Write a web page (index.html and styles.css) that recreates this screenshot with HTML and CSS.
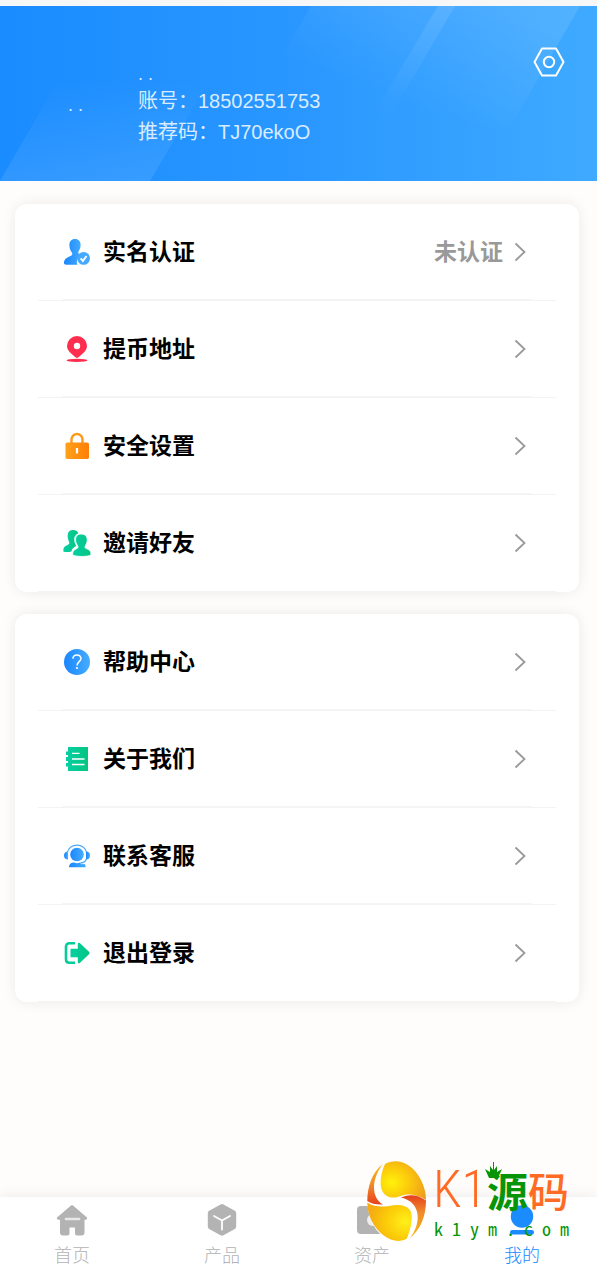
FILE: index.html
```html
<!DOCTYPE html>
<html lang="zh-CN">
<head>
	<meta charset="UTF-8">
	<meta name="viewport" content="width=device-width, initial-scale=1">
	<title>我的</title>
	<link rel="stylesheet" href="styles.css">
</head>
<body>
	<!-- 公用渐变和箭头 -->
	<svg class="defs" width="0" height="0" aria-hidden="true">
		<defs>
			<linearGradient id="blue"><stop offset="0" stop-color="#1a86ff"/><stop offset="1" stop-color="#45adff"/></linearGradient>
			<linearGradient id="green"><stop offset="0" stop-color="#06cfa4"/><stop offset="1" stop-color="#04c580"/></linearGradient>
			<linearGradient id="orange"><stop offset="0" stop-color="#ffa21a"/><stop offset="1" stop-color="#ff7e06"/></linearGradient>
			<symbol id="arrow" viewBox="0 0 12 20"><path d="M1.5 1.5L10.5 10L1.5 18.5" fill="none" stroke="#999" stroke-width="1.8"/></symbol>
		</defs>
	</svg>

	<header class="header">
		<svg class="headerBg" viewBox="0 0 597 175" preserveAspectRatio="none" aria-hidden="true">
			<defs>
				<linearGradient id="up" x1="0" y1="1" x2="0" y2="0"><stop offset="0" stop-color="#fff" stop-opacity=".1"/><stop offset="1" stop-color="#fff" stop-opacity="0"/></linearGradient>
				<linearGradient id="down" x1="0" y1="0" x2="0" y2="1"><stop offset="0" stop-color="#fff" stop-opacity=".1"/><stop offset="1" stop-color="#fff" stop-opacity="0"/></linearGradient>
				<linearGradient id="wide" gradientUnits="userSpaceOnUse" x1="480" y1="0" x2="440" y2="110"><stop offset="0" stop-color="#fff" stop-opacity=".1"/><stop offset="1" stop-color="#fff" stop-opacity="0"/></linearGradient>
			</defs>
			<path d="M0 175L58 75H209L150 175z" fill="url(#up)"/>
			<path d="M311 0H580L505 130H236z" fill="url(#wide)"/>
			<path d="M438 0H455L388 114L376 104z" fill="url(#down)"/>
		</svg>
		<div class="avatar">. .</div>
		<div class="info">
			<p class="name">. .</p>
			<p>账号：18502551753</p>
			<p>推荐码：TJ70ekoO</p>
		</div>
		<button class="setting" type="button" aria-label="设置">
			<svg viewBox="0 0 32 32" width="32" height="32" fill="none" stroke="#fff" stroke-width="2"><path d="M9 2.5H23L30.5 16L23 29.5H9L1.500 16z" stroke-linejoin="round"/><circle cx="16" cy="16" r="5.200"/></svg>
		</button>
	</header>

	<main class="content">
		<ul class="menu">
			<li><a href="#">
				<svg class="icon" viewBox="0 0 30 30"><path d="M13 2c3.600 0 5.600 2.400 5.600 6 0 2.800-1 4.600-2 6.200-.6 1.500-.2 2.600 1.200 3.200l2.200 1a6.800 6.800 0 0 0-4.600 9.300H4.500c-2 0-2.800-.8-2.500-2.600.3-2.500 1.800-4 4.400-5.100 2.600-1.100 4.300-1.700 3.800-4C8.400 14 7.400 11 7.400 8c0-3.600 2-6 5.600-6z" fill="url(#blue)"/><circle cx="21.600" cy="21.400" r="6.400" fill="#45a9ff"/><path d="M18.700 21.300l2.200 2.700 3.600-5" fill="none" stroke="#fff" stroke-width="1.900"/></svg>
				<span class="text">实名认证</span><span class="status">未认证</span><svg class="arrow"><use href="#arrow"/></svg>
			</a></li>
			<li><a href="#">
				<svg class="icon" viewBox="0 0 30 30" fill="#ff2d4e"><path fill-rule="evenodd" d="M15 2a10 10 0 0 1 10 10c0 5-5.500 8.500-8.500 11.200q-1.500 1.300-3 0C10.500 20.500 5 17 5 12A10 10 0 0 1 15 2zm0 6.800a3.200 3.200 0 1 0 0 6.400 3.200 3.200 0 0 0 0-6.400z"/><ellipse cx="15" cy="26.400" rx="10.500" ry="1.600"/></svg>
				<span class="text">提币地址</span><svg class="arrow"><use href="#arrow"/></svg>
			</a></li>
			<li><a href="#">
				<svg class="icon" viewBox="0 0 30 30"><path d="M9.500 13V8.500a5.500 5.500 0 0 1 11 0V13" fill="none" stroke="#ff9a18" stroke-width="2.400"/><rect x="3.500" y="11.500" width="23.500" height="16.500" rx="1.800" fill="url(#orange)"/><path d="M15 17v5.500" stroke="#fff" stroke-width="2.200"/></svg>
				<span class="text">安全设置</span><svg class="arrow"><use href="#arrow"/></svg>
			</a></li>
			<li><a href="#">
				<svg class="icon" viewBox="0 0 30 30" fill="url(#green)"><path d="M10.800 2c3.600 0 5.200 1.600 5.400 3.600-3.400 1.400-4.400 4.400-3.800 7.400.2 2 .8 3.300 1.800 4.600-.4 1.400-3.600 1.500-4.800 6-3 .7-6 .6-7.800.2-.8-3.900.9-5.600 3.500-6.600 2.200-.8 2.800-2.200 1.700-4C4.600 7.500 5.600 2 10.800 2z"/><path d="M19 6c5.800 0 7 4.600 5.800 8.600-.6 2-2 3.300-1.800 5 .5 1.700 6.400.9 6 7.400-3 1.900-15 1.900-18.400 0-.2-6.400 5-5.800 5.400-7.600.3-1.700-1.400-2.600-2-4.800C12.800 10.600 13.800 6 19 6z" stroke="#fff" stroke-width=".8"/></svg>
				<span class="text">邀请好友</span><svg class="arrow"><use href="#arrow"/></svg>
			</a></li>
		</ul>

		<ul class="menu">
			<li><a href="#">
				<svg class="icon" viewBox="0 0 30 30"><circle cx="15" cy="15" r="13" fill="url(#blue)"/><path d="M11 11.800C11 6.800 19 6.800 19 11.500c0 3-4 3.300-4 7" fill="none" stroke="#fff" stroke-width="1.500"/><circle cx="15" cy="21" r="1.100" fill="#fff"/></svg>
				<span class="text">帮助中心</span><svg class="arrow"><use href="#arrow"/></svg>
			</a></li>
			<li><a href="#">
				<svg class="icon" viewBox="0 0 30 30"><path d="M6 3H26V27H6V22.500H4V19H6V17H4V13H6V11H4V7.500H6z" fill="url(#green)"/><path d="M10 9.300h7.500M10 15h12.500M10 20.500h12.500" stroke="#fff" stroke-width="1.300"/></svg>
				<span class="text">关于我们</span><svg class="arrow"><use href="#arrow"/></svg>
			</a></li>
			<li><a href="#">
				<svg class="icon" viewBox="0 0 30 30" fill="url(#blue)"><circle cx="15" cy="13.500" r="6.800"/><path d="M5.200 12C6.500 1.600 23.500 1.600 24.800 12" fill="none" stroke="#4ba8ff" stroke-width="1.200"/><path d="M6 10.500v8C3.500 18.500 2 17 2 14.500S3.500 10.500 6 10.500z"/><path d="M24 10.500v8c2.500 0 4-1.500 4-4s-1.500-4-4-4z"/><path d="M24.400 18q-1.400 4-6.400 4" fill="none" stroke="#4ba8ff" stroke-width="1.200"/><path d="M7 26.300c.2-3.600 2.300-4.800 5.200-4.800q2.800 1.400 5.600 0l1.200 1.800 3.600-.3c.8.800 1.200 1.900 1.200 3.300z"/></svg>
				<span class="text">联系客服</span><svg class="arrow"><use href="#arrow"/></svg>
			</a></li>
			<li><a href="#">
				<svg class="icon" viewBox="0 0 30 30"><path d="M13 5.300H7.500Q4 5.300 4 8.500V21.500Q4 24.700 7.500 24.700H13" fill="none" stroke="#06cb9b" stroke-width="2.600"/><path d="M8.500 10.800h7.300V5.500q.6-1.500 2-.4l9.400 9q.8.900 0 1.800l-9.400 9q-1.400 1.100-2-.4v-5.300H8.500z" fill="url(#green)"/></svg>
				<span class="text">退出登录</span><svg class="arrow"><use href="#arrow"/></svg>
			</a></li>
		</ul>
	</main>

	<nav class="tabbar">
		<a href="#">
			<svg viewBox="0 0 32 32" width="32" height="32"><path d="M15 1.400q1-1 2 0L31 13.500q.8 2-1.200 2.200H28.500V28.500q0 3-3 3H21q-2 0-2-2V23.500H13.500v6q0 2-2 2H7q-3 0-3-3V15.700H2.200Q.2 15.500 1 13.500z" fill="#b3b3b3"/><path d="M10 15h13" stroke="#e8e8e8" stroke-width="2.600" stroke-linecap="round"/></svg>
			<span>首页</span>
		</a>
		<a href="#">
			<svg viewBox="0 0 32 32" width="32" height="32"><path d="M14.500.5q1.500-.8 3 0l11.300 6.300q1.400.9 1.400 2.500V22.500q0 1.600-1.400 2.500L17.500 31.300q-1.500.8-3 0L3.200 25q-1.400-.9-1.400-2.500V9.300q0-1.600 1.400-2.500z" fill="#b3b3b3"/><path d="M8 12l8 4.500 8-4.500M16 16.500V25.500" fill="none" stroke="#fff" stroke-width="1.800" stroke-linecap="round"/></svg>
			<span>产品</span>
		</a>
		<a href="#">
			<svg viewBox="0 0 32 32" width="32" height="32"><rect x="1" y="2" width="30" height="28" rx="4" fill="#b3b3b3"/><circle cx="17" cy="16" r="6" fill="#eee"/></svg>
			<span>资产</span>
		</a>
		<a class="active" href="#">
			<svg viewBox="0 0 32 32" width="32" height="32" fill="#1a8cff"><circle cx="16" cy="12.500" r="11.200"/><rect x="4" y="26" width="24" height="4.500" rx="2.200"/></svg>
			<span>我的</span>
		</a>

		<svg class="logo" viewBox="0 0 204 84" width="204" height="84" role="img" aria-label="K1源码 k1ym.com">
			<defs>
				<radialGradient id="goldTop" cx=".25" cy=".55" r=".8"><stop offset="0" stop-color="#fff20a"/><stop offset=".5" stop-color="#fbc80c"/><stop offset="1" stop-color="#ee9c1e"/></radialGradient>
				<radialGradient id="goldBottom" cx=".85" cy=".5" r=".8"><stop offset="0" stop-color="#fff01a"/><stop offset=".55" stop-color="#fbcb08"/><stop offset="1" stop-color="#f5ac12"/></radialGradient>
				<linearGradient id="edge" x1="0" y1="0" x2="0" y2="1"><stop offset="0" stop-color="#f8ba10"/><stop offset=".5" stop-color="#f08c2a"/><stop offset="1" stop-color="#e6401e"/></linearGradient>
				<linearGradient id="edge2" x1="0" y1="0" x2="0" y2="1"><stop offset="0" stop-color="#e6401e"/><stop offset=".4" stop-color="#f08c2a"/><stop offset="1" stop-color="#f8ba10"/></linearGradient>
			</defs>
			<ellipse cx="30.700" cy="42" rx="29.300" ry="40" fill="#fff"/>
			<path d="M17 5C6 13 1.400 28 1.300 42Q7 46 17 45.500C5 39 5 20 17 5z" fill="url(#edge)"/>
			<path d="M19 5C32-2 47 5 55 21Q60 31 60 41 51 35 41 35.500C34 36 31 40 23 38 12 34 13 18 19 5z" fill="url(#goldTop)"/>
			<path d="M35 38.500Q48 33 60 41.500C60 58 54 71 44 79 56 64 55 43 35 38.500z" fill="url(#edge2)"/>
			<path d="M1.300 43.500C8 48 16 48 23 47 33 45 40 46 44 51 48 57 45 69 41 79.500 34 84 25 82 17 76 7 68 1.500 56 1.300 43.500z" fill="url(#goldBottom)"/>
			<g class="logoName">
				<text class="latin" x="67" y="48">K1</text>
				<text class="yuan" x="121" y="48">源</text>
				<text x="162" y="48">码</text>
			</g>
			<path d="M119 10l5 3 0-6 3 4 0-8 1 0 0 8 3-4 0 6 5-3-4 9h-9z" fill="#079407"/>
			<text class="site" x="68" y="77">k 1 y m . c o m</text>
		</svg>
	</nav>
</body>
</html>
```

FILE: styles.css
```css
*{box-sizing:border-box;}
body{display:flex;flex-direction:column;min-height:100vh;margin:0;border-top:6px solid #f7f7f7;background-color:#fefdfb;font-family:"Liberation Sans","Noto Sans CJK SC",sans-serif;}
ul,p{list-style:none;padding:0;margin:0;}
a{color:inherit;text-decoration:none;}
svg{display:block;flex:none;}
.defs{position:absolute;}

/* 头部 */
.header{position:relative;display:flex;height:175px;padding-right:32px;background:linear-gradient(90deg,#1a8cff,#2997ff 50%,#3faaff);color:#d9ecff;font-size:20px;line-height:31px;}
.headerBg{position:absolute;top:0;left:0;width:100%;height:100%;}
.avatar{position:relative;width:138px;padding:84px 0 0 68px;font-size:18px;}
.info{position:relative;flex:1;padding-top:56px;}
.info .name{font-size:18px;line-height:24px;}
.setting{position:relative;align-self:flex-start;margin-top:40px;padding:0;border:0;background:none;cursor:pointer;}

/* 菜单 */
.content{display:flex;flex-direction:column;gap:22px;padding:23px 18px 23px 15px;}
.menu{padding:0 23px;border-radius:12px;background-color:#fff;box-shadow:0 0 14px rgba(0,0,0,.08);}
.menu li{padding:0 24px;border-bottom:1px solid #f3f3f3;}
.menu a{display:flex;align-items:center;gap:11px;height:96px;padding-right:6px;border-bottom:1px solid #f5f5f5;color:#000;font-size:23px;font-weight:bold;}
.menu li:last-child a{border-color:transparent;}
.menu .icon{width:30px;height:30px;}
.menu .text,.menu .status{padding-bottom:4px;}
.menu .text{flex:1;}
.menu .status{color:#999;}
.menu .arrow{width:12px;height:20px;}

/* 底部导航 */
.tabbar{position:relative;display:flex;justify-content:space-between;margin-top:auto;padding:7px 57px 3px 54px;background-color:#fff;box-shadow:0 0 14px rgba(0,0,0,.08);color:#b3b3b3;font-size:18px;font-weight:300;line-height:24px;}
.tabbar a{display:flex;flex-direction:column;align-items:center;gap:8px;}
.tabbar .active{color:#1a8cff;}
.logo{position:absolute;right:27px;bottom:28px;pointer-events:none;}
.logoName{fill:#ff6b24;font-family:"Noto Sans CJK SC",sans-serif;font-size:41px;font-weight:500;}
.logoName .latin{font-family:"Roboto Condensed","Roboto",sans-serif;font-size:52px;font-weight:300;}
.logoName .yuan{fill:#079407;font-weight:bold;}
.site{fill:#079407;font-family:"Noto Sans Mono CJK SC","Liberation Mono",monospace;font-size:18px;font-weight:500;}
```
